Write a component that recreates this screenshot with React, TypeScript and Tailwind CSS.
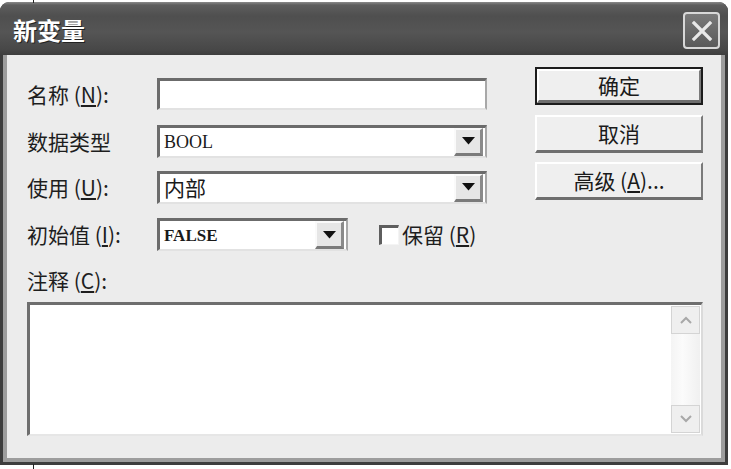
import React from "react";

const cjk = { fontFamily: '"Noto Sans CJK SC", "Noto Sans", sans-serif' };
const serif = { fontFamily: '"Liberation Serif", "Noto Sans CJK SC", serif' };

function Arrow() {
  return (
    <div className="w-[29px] h-[28px] mr-[2px] bg-[#e6e6e6] border-t-[2px] border-l-[2px] border-t-[#fafafa] border-l-[#fafafa] border-b-[3px] border-r-[3px] border-b-[#7a7a7a] border-r-[#8a8a8a] flex items-center justify-center">
      <svg width="13" height="8" viewBox="0 0 13 8">
        <polygon points="0,0 13,0 6.5,7.5" fill="#111" />
      </svg>
    </div>
  );
}

function Combo({ w, children }: { w: string; children: React.ReactNode }) {
  return (
    <div className={`${w} h-[33px] bg-white border-t-[3px] border-l-[3px] border-t-[#6b6b6b] border-l-[#6b6b6b] border-r-[2px] border-r-[#a8a8a8] border-b-[2px] border-b-[#e2e2e2] flex items-center justify-between`}>
      <div className="pl-[4px] text-[#1a1a1a] leading-none">{children}</div>
      <Arrow />
    </div>
  );
}

function Btn({ children, def }: { children: React.ReactNode; def?: boolean }) {
  const inner = (
    <div className="w-full h-full bg-[#efefef] border-t-[2px] border-l-[2px] border-t-white border-l-white border-b-[3px] border-r-[2px] border-b-[#6e6e6e] border-r-[#7a7a7a] flex items-center justify-center text-[21px] text-[#1a1a1a] leading-none">
      {children}
    </div>
  );
  return def ? (
    <div className="w-[168px] h-[38px] border-[2px] border-[#1c1c1c]">{inner}</div>
  ) : (
    <div className="w-[168px] h-[38px]">{inner}</div>
  );
}

function Label({ children }: { children: React.ReactNode }) {
  return <div className="w-[130px] text-[21px] leading-none text-[#1e1e1e] whitespace-nowrap">{children}</div>;
}

export default function App() {
  return (
    <div className="w-[731px] h-[469px] bg-white relative overflow-hidden" style={cjk}>
      <div className="absolute left-[33px] top-0 w-[1px] h-[3px] bg-[#222]" />
      <div className="absolute left-[33px] bottom-0 w-[1px] h-[5px] bg-[#222]" />
      <div className="mt-[2px] w-[728px] h-[463px] flex flex-col rounded-t-[9px] bg-[#3d3d3d] overflow-hidden">
        {/* title bar */}
        <div className="h-[53px] flex items-center justify-between pl-[13px] pr-[8px] bg-[linear-gradient(to_bottom,#8a8a8a_0px,#5e5e5e_3px,#4f4f4f_14px,#555555_30px,#474747_48px,#3e3e3e_53px)]">
          <div className="text-[24px] font-bold text-white leading-none mt-[2px] [text-shadow:1px_1px_0_#222]">新变量</div>
          <div className="w-[37px] h-[37px] rounded-[4px] border-[2px] border-[#d8d8d8] bg-[linear-gradient(to_bottom,#7a7a7a,#5a5a5a)] flex items-center justify-center mt-[4px]">
            <svg width="22" height="22" viewBox="0 0 22 22">
              <path d="M3 3 L19 19 M19 3 L3 19" stroke="#e8e8e8" strokeWidth="3.2" strokeLinecap="square" />
            </svg>
          </div>
        </div>
        {/* body */}
        <div className="flex-1 px-[3px] pb-[3px] flex">
          <div className="flex-1 bg-[#ececec] border-l-[4px] border-r-[4px] border-b-[4px] border-[#9d9d9d] pl-[20px] pr-[18px] pt-[12px] flex flex-col">
            <div className="flex justify-between">
              <div className="pt-[11px] flex flex-col">
                <div className="flex items-center h-[32px]">
                  <Label>名称 (<span className="underline">N</span>):</Label>
                  <div className="w-[330px] h-[32px] bg-white border-t-[3px] border-l-[3px] border-t-[#6b6b6b] border-l-[#6b6b6b] border-r-[2px] border-r-[#a8a8a8] border-b-[2px] border-b-[#e2e2e2]" />
                </div>
                <div className="flex items-center h-[34px] mt-[14px]">
                  <Label>数据类型</Label>
                  <Combo w="w-[330px]">
                    <span className="text-[18px]" style={serif}>BOOL</span>
                  </Combo>
                </div>
                <div className="flex items-center h-[32px] mt-[13px]">
                  <Label>使用 (<span className="underline">U</span>):</Label>
                  <Combo w="w-[330px]">
                    <span className="text-[21px]">内部</span>
                  </Combo>
                </div>
                <div className="flex items-center h-[33px] mt-[15px]">
                  <Label>初始值 (<span className="underline">I</span>):</Label>
                  <Combo w="w-[191px]">
                    <span className="text-[17px] font-bold" style={serif}>FALSE</span>
                  </Combo>
                  <div className="ml-[31px] w-[20px] h-[20px] bg-white border-t-[3px] border-l-[3px] border-t-[#5e5e5e] border-l-[#5e5e5e] border-r border-b border-[#f4f4f4]" />
                  <div className="ml-[3px] text-[21px] leading-none text-[#1e1e1e]">保留 (<span className="underline">R</span>)</div>
                </div>
              </div>
              <div className="flex flex-col">
                <Btn def>确定</Btn>
                <div className="h-[10px]" />
                <Btn>取消</Btn>
                <div className="h-[9px]" />
                <Btn>高级 (<span className="underline">A</span>)...</Btn>
              </div>
            </div>
            <div className="mt-[19px] text-[21px] leading-none text-[#1e1e1e]">注释 (<span className="underline">C</span>):</div>
            <div className="mt-[11px] h-[134px] bg-white border-t-[3px] border-l-[3px] border-t-[#6e6e6e] border-l-[#6e6e6e] border-r-[2px] border-r-[#dadada] border-b-[2px] border-b-[#e6e6e6] flex justify-end pt-[1px] pb-[1px] pr-[1px]">
              <div className="w-[29px] h-full flex flex-col justify-between bg-[linear-gradient(to_right,#f4f4f4,#fbfbfb_40%,#f0f0f0)]">
                <div className="h-[28px] bg-[#efefef] border border-[#d4d4d4] flex items-center justify-center">
                  <svg width="14" height="10" viewBox="0 0 14 10">
                    <path d="M2 8 L7 3 L12 8" stroke="#a8a8a8" strokeWidth="2" fill="none" />
                  </svg>
                </div>
                <div className="h-[28px] bg-[#efefef] border border-[#d4d4d4] flex items-center justify-center">
                  <svg width="14" height="10" viewBox="0 0 14 10">
                    <path d="M2 2 L7 7 L12 2" stroke="#a8a8a8" strokeWidth="2" fill="none" />
                  </svg>
                </div>
              </div>
            </div>
          </div>
        </div>
      </div>
    </div>
  );
}
